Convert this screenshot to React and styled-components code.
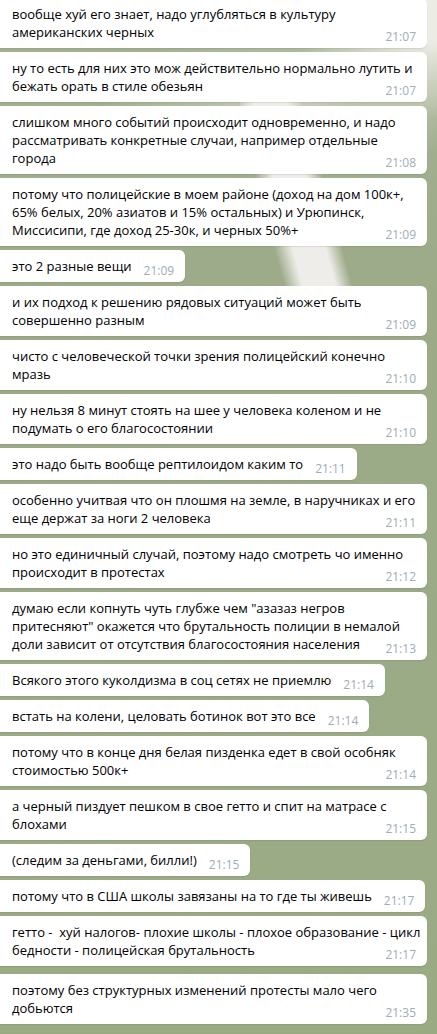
import React from 'react'
import styled, { createGlobalStyle } from 'styled-components'

const messages = [
    { lines: ['вообще хуй его знает, надо углубляться в культуру', 'американских черных'], time: '21:07', wide: true },
    { lines: ['ну то есть для них это мож действительно нормально лутить и', 'бежать орать в стиле обезьян'], time: '21:07', wide: true },
    { lines: ['слишком много событий происходит одновременно, и надо', 'рассматривать конкретные случаи, например отдельные', 'города'], time: '21:08', wide: true },
    { lines: ['потому что полицейские в моем районе (доход на дом 100к+,', '65% белых, 20% азиатов и 15% остальных) и Урюпинск,', 'Миссисипи, где доход 25-30к, и черных 50%+'], time: '21:09', wide: true },
    { lines: ['это 2 разные вещи'], time: '21:09' },
    { lines: ['и их подход к решению рядовых ситуаций может быть', 'совершенно разным'], time: '21:09', wide: true },
    { lines: ['чисто с человеческой точки зрения полицейский конечно', 'мразь'], time: '21:10', wide: true },
    { lines: ['ну нельзя 8 минут стоять на шее у человека коленом и не', 'подумать о его благосостоянии'], time: '21:10', wide: true },
    { lines: ['это надо быть вообще рептилоидом каким то'], time: '21:11' },
    { lines: ['особенно учитвая что он плошмя на земле, в наручниках и его', 'еще держат за ноги 2 человека'], time: '21:11', wide: true },
    { lines: ['но это единичный случай, поэтому надо смотреть чо именно', 'происходит в протестах'], time: '21:12', wide: true },
    { lines: ['думаю если копнуть чуть глубже чем "азазаз негров', 'притесняют" окажется что брутальность полиции в немалой', 'доли зависит от отсутствия благосостояния населения'], time: '21:13', wide: true },
    { lines: ['Всякого этого куколдизма в соц сетях не приемлю'], time: '21:14' },
    { lines: ['встать на колени, целовать ботинок вот это все'], time: '21:14' },
    { lines: ['потому что в конце дня белая пизденка едет в свой особняк', 'стоимостью 500к+'], time: '21:14', wide: true },
    { lines: ['а черный пиздует пешком в свое гетто и спит на матрасе с', 'блохами'], time: '21:15', wide: true },
    { lines: ['(следим за деньгами, билли!)'], time: '21:15' },
    { lines: ['потому что в США школы завязаны на то где ты живешь'], time: '21:17' },
    { lines: ['гетто -  хуй налогов- плохие школы - плохое образование - цикл', 'бедности - полицейская брутальность'], time: '21:17', wide: true },
    { lines: ['поэтому без структурных изменений протесты мало чего', 'добьются'], time: '21:35', wide: true, later: true },
]

const Message = ({ lines, time, wide, later }) => {
    const head = lines.slice(0, -1)
    const last = lines[lines.length - 1]

    return (
        <Bubble $wide={wide} $later={later}>
            {head.map((line, i) => (
                <Line key={i}>{line}</Line>
            ))}
            <LastRow>
                <Line>{last}</Line>
                <Time>{time}</Time>
            </LastRow>
        </Bubble>
    )
}

const App = () => {
    return (
        <>
            <GlobalStyle />
            <Chat>
                {messages.map((m, i) => (
                    <Message key={i} {...m} />
                ))}
            </Chat>
        </>
    )
}

// blurred wallpaper: light corner top right, pale streak behind the upper bubbles
const GlobalStyle = createGlobalStyle`
    html, body {
        margin: 0;
        padding: 0;
    }

    body {
        min-height: 1034px;
        overflow: hidden;
        font-family: "Open Sans", "Liberation Sans", sans-serif;
        background-color: #9aaa85;
        background-image:
            radial-gradient(ellipse 150px 120px at 437px 0px, rgba(236, 236, 228, 1) 35%, rgba(236, 236, 228, 0) 100%),
            linear-gradient(75deg, rgba(238, 237, 233, 0) 26%, rgba(238, 237, 233, 1) 36%, rgba(238, 237, 233, 1) 54%, rgba(238, 237, 233, 0) 63%),
            radial-gradient(ellipse 200px 70px at 300px 100px, rgba(206, 210, 192, 0.85), rgba(206, 210, 192, 0) 100%),
            linear-gradient(180deg, #a6b295 0%, #9caa88 30%, #9aab84 100%);
        background-size: auto, 120px 240px, auto, auto;
        background-position: 0 0, 240px 60px, 0 0, 0 0;
        background-repeat: no-repeat;
    }
`;

const Chat = styled.div`
    display: flex;
    flex-direction: column;
    align-items: flex-start;
    gap: 4px;
    margin-top: -2px;
`;

const Bubble = styled.div`
    box-sizing: border-box;
    width: ${props => (props.$wide ? '427px' : 'fit-content')};
    margin-top: ${props => (props.$later ? '4px' : '0')};
    padding: 7px 11px 7px 12px;
    background: #ffffff;
    border-radius: 0 6px 6px 0;
    box-shadow: 0 1px 1px rgba(60, 70, 50, 0.12);
`;

const Line = styled.div`
    white-space: pre;
    font-size: 13px;
    line-height: 18px;
    color: #000000;
`;

const LastRow = styled.div`
    display: flex;
    align-items: flex-end;
`;

const Time = styled.span`
    flex-shrink: 0;
    margin-left: auto;
    padding-left: 12px;
    margin-bottom: -3px;
    font-size: 12px;
    line-height: 14px;
    color: #a0acb6;
`;

export default App
